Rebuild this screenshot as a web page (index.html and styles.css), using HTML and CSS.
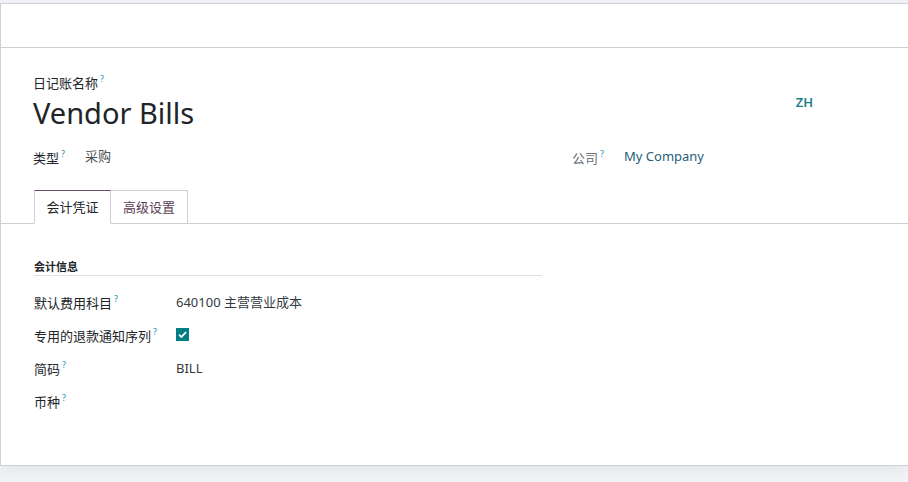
FILE: index.html
```html
<!DOCTYPE html>
<html lang="zh">
<head>
    <meta charset="UTF-8">
    <meta name="viewport" content="width=device-width, initial-scale=1.0">
    <title>Vendor Bills</title>
    <link rel="stylesheet" href="styles.css">
</head>
<body>
    <div class="page">
        <div class="card">
            <div class="statusbar"></div>

            <div class="sheet">
                <div class="title-row">
                    <div class="title-field">
                        <label class="title-label">日记账名称<sup class="tip">?</sup></label>
                        <h1 class="title">Vendor Bills</h1>
                    </div>
                    <span class="lang">ZH</span>
                </div>

                <div class="groups">
                    <div class="field">
                        <span class="label">类型<sup class="tip">?</sup></span>
                        <span class="value muted">采购</span>
                    </div>
                    <div class="field">
                        <span class="label light">公司<sup class="tip">?</sup></span>
                        <span class="value link">My Company</span>
                    </div>
                </div>
            </div>

            <div class="tabs">
                <span class="tab active">会计凭证</span>
                <span class="tab">高级设置</span>
            </div>

            <div class="tab-pane">
                <div class="section">
                    <div class="section-title">会计信息</div>
                    <div class="row">
                        <span class="row-label">默认费用科目<sup class="tip">?</sup></span>
                        <span class="row-value">640100 主营营业成本</span>
                    </div>
                    <div class="row">
                        <span class="row-label">专用的退款通知序列<sup class="tip">?</sup></span>
                        <span class="row-value">
                            <span class="checkbox">
                                <svg width="9" height="7" viewBox="0 0 9 7"><path d="M1 3.6 L3.4 6 L8 1.2" fill="none" stroke="#fff" stroke-width="1.8"/></svg>
                            </span>
                        </span>
                    </div>
                    <div class="row">
                        <span class="row-label">简码<sup class="tip">?</sup></span>
                        <span class="row-value">BILL</span>
                    </div>
                    <div class="row">
                        <span class="row-label">币种<sup class="tip">?</sup></span>
                        <span class="row-value"></span>
                    </div>
                </div>
            </div>
        </div>
    </div>
</body>
</html>
```

FILE: styles.css
```css
* { margin: 0; padding: 0; box-sizing: border-box; }
body {
    font-family: "Noto Sans", "Noto Sans CJK SC", sans-serif;
    font-size: 13px;
    color: #212529;
    background: #f2f3f6;
    overflow: hidden;
}
.page { padding-top: 3px; height: 482px; }
.card {
    background: white;
    border: 1px solid #cfd0d6;
    border-right: none;
    height: 463px;
    box-shadow: 0 6px 14px rgba(0,0,0,0.05);
}
.statusbar { height: 44px; border-bottom: 1px solid #cfd0d6; }
.sheet { padding: 22px 0 0 32px; }
.title-row { display: flex; align-items: flex-start; width: 782px; }
.title-field { flex: 1; }
.title-label { display: block; line-height: 18px; }
.title { font-size: 29px; font-weight: 400; line-height: 38px; margin-top: 2px; }
.lang { color: #1a7f86; font-weight: 600; font-size: 13px; margin-top: 23px; margin-right: 2px; }
.tip { color: #1a8fb3; font-size: 9px; vertical-align: 6px; margin-left: 2px; }
.groups {
    display: grid;
    grid-template-columns: 508px 1fr;
    column-gap: 31px;
    margin-top: 12px;
}
.field { display: flex; align-items: center; line-height: 20px; }
.label { width: 52px; }
.light { color: #6c6f76; }
.value.muted { color: #4a4f55; }
.value.link { color: #1d5f7a; }
.tabs {
    display: flex;
    padding-left: 33px;
    margin-top: 22px;
    border-bottom: 1px solid #cfd0d6;
}
.tab {
    width: 77px;
    height: 34px;
    line-height: 33px;
    text-align: center;
    border: 1px solid #cfd0d6;
    border-left: none;
    color: #5b3e56;
    margin-bottom: -1px;
}
.tab.active {
    border-left: 1px solid #cfd0d6;
    border-top-color: #714b67;
    border-bottom-color: white;
    color: #212529;
}
.section { width: 508px; margin: 35px 0 0 33px; }
.section-title {
    font-size: 11px;
    font-weight: 700;
    line-height: 15px;
    padding-bottom: 1px;
    border-bottom: 1px solid #dee2e6;
}
.row { display: flex; align-items: center; height: 33px; }
.row:nth-child(2) { margin-top: 9px; }
.row-label { width: 142px; }
.row-value { color: #343a40; display: flex; align-items: center; }
.checkbox {
    width: 13px;
    height: 13px;
    background: #017e84;
    display: flex;
    align-items: center;
    justify-content: center;
}
```
